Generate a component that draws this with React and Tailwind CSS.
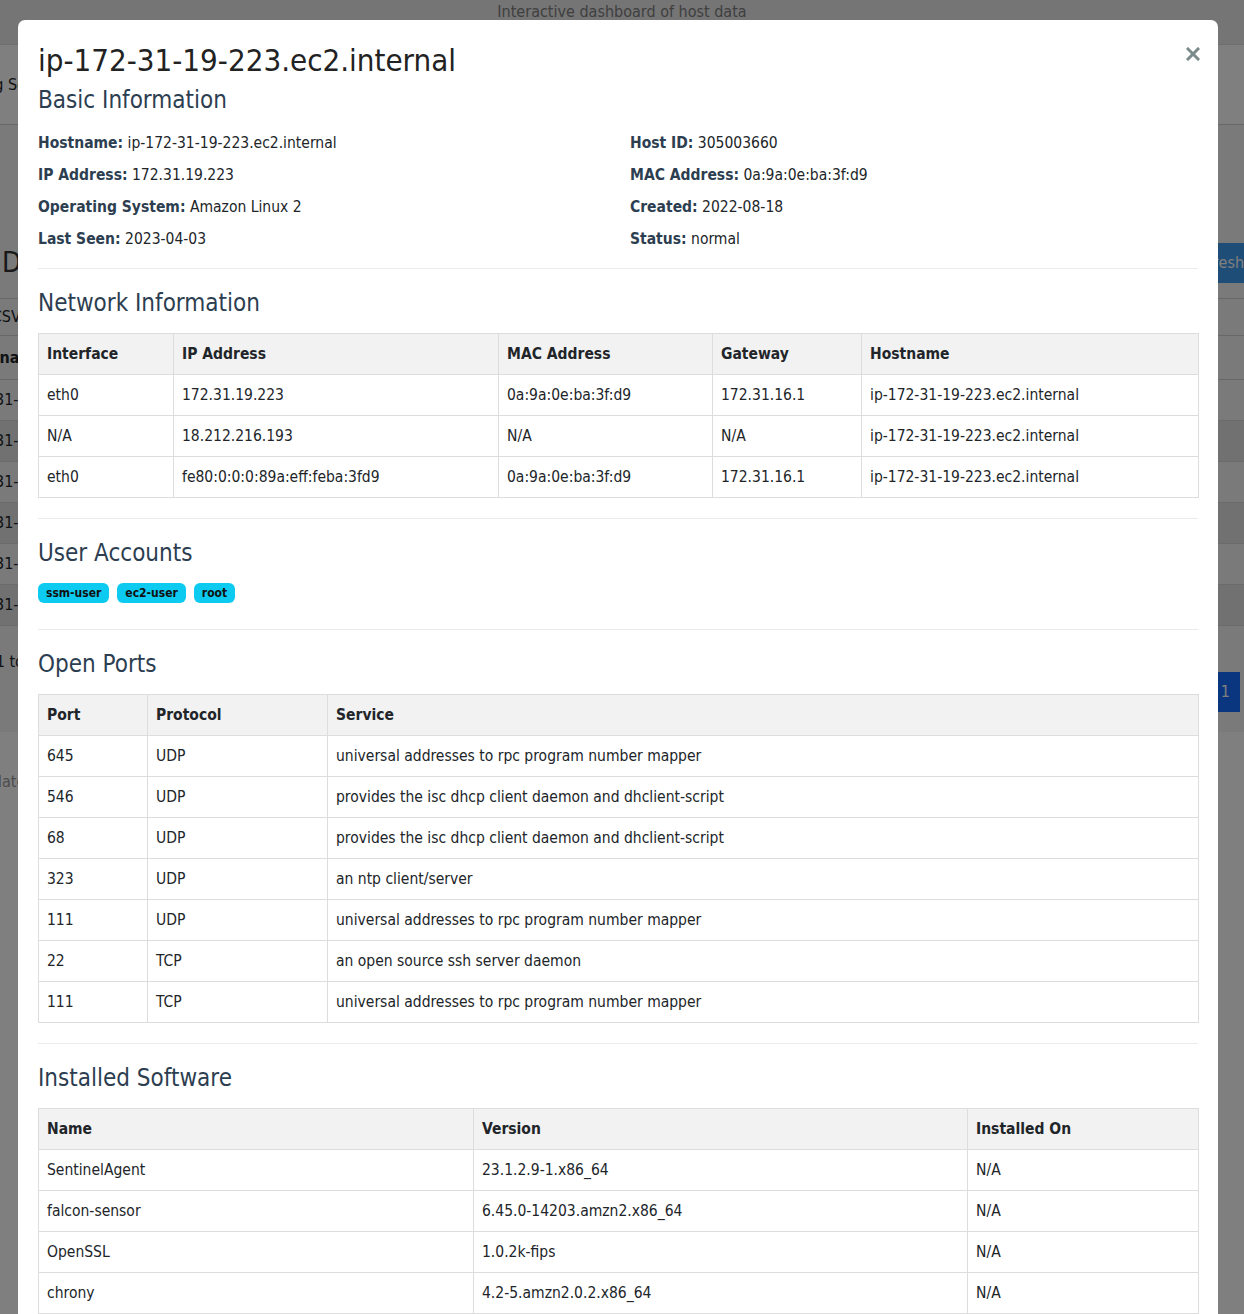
import React from 'react';

const FONT = { fontFamily: '"DejaVu Sans Condensed", "DejaVu Sans", Tahoma, sans-serif' };

const networkRows = [
    ['eth0', '172.31.19.223', '0a:9a:0e:ba:3f:d9', '172.31.16.1', 'ip-172-31-19-223.ec2.internal'],
    ['N/A', '18.212.216.193', 'N/A', 'N/A', 'ip-172-31-19-223.ec2.internal'],
    ['eth0', 'fe80:0:0:0:89a:eff:feba:3fd9', '0a:9a:0e:ba:3f:d9', '172.31.16.1', 'ip-172-31-19-223.ec2.internal'],
];

const portRows = [
    ['645', 'UDP', 'universal addresses to rpc program number mapper'],
    ['546', 'UDP', 'provides the isc dhcp client daemon and dhclient-script'],
    ['68', 'UDP', 'provides the isc dhcp client daemon and dhclient-script'],
    ['323', 'UDP', 'an ntp client/server'],
    ['111', 'UDP', 'universal addresses to rpc program number mapper'],
    ['22', 'TCP', 'an open source ssh server daemon'],
    ['111', 'TCP', 'universal addresses to rpc program number mapper'],
];

const softwareRows = [
    ['SentinelAgent', '23.1.2.9-1.x86_64', 'N/A'],
    ['falcon-sensor', '6.45.0-14203.amzn2.x86_64', 'N/A'],
    ['OpenSSL', '1.0.2k-fips', 'N/A'],
    ['chrony', '4.2-5.amzn2.0.2.x86_64', 'N/A'],
    ['amazon-ssm-agent', '3.2.582.0-1.x86_64', 'N/A'],
    ['openssh-server', '7.4p1-22.amzn2.0.1.x86_64', 'N/A'],
];

const basicInfo = [
    ['Hostname:', 'ip-172-31-19-223.ec2.internal'],
    ['Host ID:', '305003660'],
    ['IP Address:', '172.31.19.223'],
    ['MAC Address:', '0a:9a:0e:ba:3f:d9'],
    ['Operating System:', 'Amazon Linux 2'],
    ['Created:', '2022-08-18'],
    ['Last Seen:', '2023-04-03'],
    ['Status:', 'normal'],
];

const DataTable = ({ headers, widths, rows }) => (
    <table className="w-full border-collapse table-fixed mt-[15px]">
        <colgroup>
            {widths.map((w, i) => <col key={i} style={{ width: w }} />)}
        </colgroup>
        <thead>
            <tr className="bg-[#f2f2f2]">
                {headers.map((h) => (
                    <th key={h} className="border border-[#dddddd] px-[8px] py-[8px] text-left font-bold leading-[24px] text-[#212529]">
                        {h}
                    </th>
                ))}
            </tr>
        </thead>
        <tbody>
            {rows.map((row, i) => (
                <tr key={i}>
                    {row.map((c, j) => (
                        <td key={j} className="border border-[#dddddd] px-[8px] py-[8px] leading-[24px] text-[#212529] whitespace-nowrap overflow-hidden">
                            {c}
                        </td>
                    ))}
                </tr>
            ))}
        </tbody>
    </table>
);

const SectionTitle = ({ children }) => (
    <h4 className="mt-[20px] text-[24px] leading-[29px] font-normal text-[#2c3e50]">{children}</h4>
);

const Divider = ({ className }) => <hr className={`border-0 border-t border-[#ebebeb] ${className}`} />;

// left edge of the page that peeks out beside the dialog
const EdgeText = ({ offset, className = '', children }) => (
    <div className="w-[18px] overflow-hidden">
        <span className={`block whitespace-nowrap ${offset} ${className}`}>{children}</span>
    </div>
);

const BackgroundPage = () => (
    <div className="w-[1244px] min-h-[1314px] bg-white overflow-hidden text-[16px] text-[#212529]">
        <div className="h-[45px] bg-[#eaeaea] border-b border-[#dcdcdc] flex justify-center">
            <span className="leading-[24px] text-[#7e7e7e]">Interactive dashboard of host data</span>
        </div>
        <div className="h-[80px] border-b border-[#d0d0d0] flex items-center">
            <EdgeText offset="ml-[-62px]">Listening Services</EdgeText>
        </div>
        <div className="h-[607px] bg-[#f4f4f4] pt-[113px] overflow-hidden">
            <div className="flex items-center justify-between h-[50px]">
                <EdgeText offset="ml-[2px]" className="text-[28px] text-[#333]">Dashboard</EdgeText>
                <div className="w-[26px] overflow-hidden flex justify-end">
                    <span className="shrink-0 bg-[#3c9aee] text-white rounded-l px-[12px] leading-[40px] mr-[-12px]">Refresh</span>
                </div>
            </div>
            <div className="mt-[10px] border-t border-[#cfcfcf] h-[37px] flex items-center">
                <EdgeText offset="ml-[-60px]">Export CSV</EdgeText>
            </div>
            <div className="border-t border-[#cfcfcf]">
                <div className="h-[44px] border-b border-[#cfcfcf] flex items-center font-bold">
                    <EdgeText offset="ml-[-38px]">Hostname</EdgeText>
                </div>
                {[0, 1, 2, 3, 4, 5].map((i) => (
                    <div key={i} className={`h-[41px] border-b border-[#d6d6d6] flex items-center ${i % 2 === 1 ? 'bg-[#e2e2e2]' : ''}`}>
                        <EdgeText offset="ml-[-56px]">ip-172-31-19-2{i}.ec2.internal</EdgeText>
                    </div>
                ))}
            </div>
            <div className="flex items-start justify-between mt-[20px]">
                <div className="mt-[4px]">
                    <EdgeText offset="ml-[-70px]">Showing 1 to 6 of 6 entries</EdgeText>
                </div>
                <span className="mr-[4px] mt-[26px] bg-[#146aff] text-white pl-[6px] pr-[10px] leading-[40px]">1</span>
            </div>
        </div>
        <div className="pt-[38px]">
            <EdgeText offset="ml-[-60px]" className="text-[#999]">Last update</EdgeText>
        </div>
    </div>
);

export default function App() {
    return (
        <div className="relative w-[1244px] h-[1314px] overflow-hidden" style={FONT}>
            <BackgroundPage />

            {/* Modal backdrop + dialog */}
            <div className="absolute inset-0 bg-black/50 overflow-hidden">
                <div className="ml-[18px] mt-[20px] w-[1200px] bg-white rounded-[7px] px-[20px] pt-[22px] pb-[40px] relative text-[15.5px] text-[#212529]">
                    <button className="absolute right-[18px] top-[27px] w-[14px] h-[14px]" aria-label="Close">
                        <svg viewBox="0 0 14 14" className="w-[14px] h-[14px]">
                            <path d="M2 2 L12 12 M12 2 L2 12" stroke="#7b8a8b" strokeWidth="3" strokeLinecap="square" />
                        </svg>
                    </button>

                    <h2 className="text-[31px] leading-[37px] font-normal text-[#222]">ip-172-31-19-223.ec2.internal</h2>

                    <h4 className="mt-[7px] text-[24px] leading-[29px] font-normal text-[#2c3e50]">Basic Information</h4>
                    <div className="mt-[16px] grid grid-cols-2 gap-x-[24px] gap-y-[8px]">
                        {basicInfo.map(([label, value]) => (
                            <div key={label} className="leading-[24px]">
                                <span className="font-bold text-[#2c3e50]">{label}</span> {value}
                            </div>
                        ))}
                    </div>

                    <Divider className="mt-[17px]" />
                    <SectionTitle>Network Information</SectionTitle>
                    <DataTable
                        headers={['Interface', 'IP Address', 'MAC Address', 'Gateway', 'Hostname']}
                        widths={['135px', '325px', '214px', '149px', '337px']}
                        rows={networkRows}
                    />

                    <Divider className="mt-[20px]" />
                    <SectionTitle>User Accounts</SectionTitle>
                    <div className="mt-[15px] flex gap-[8px]">
                        {['ssm-user', 'ec2-user', 'root'].map((u) => (
                            <span key={u} className="bg-[#0dcaf0] text-[#111] text-[12px] font-bold leading-[12px] px-[8px] py-[4px] rounded-[6px]">
                                {u}
                            </span>
                        ))}
                    </div>

                    <Divider className="mt-[26px]" />
                    <SectionTitle>Open Ports</SectionTitle>
                    <DataTable
                        headers={['Port', 'Protocol', 'Service']}
                        widths={['109px', '180px', '871px']}
                        rows={portRows}
                    />

                    <Divider className="mt-[20px]" />
                    <SectionTitle>Installed Software</SectionTitle>
                    <DataTable
                        headers={['Name', 'Version', 'Installed On']}
                        widths={['435px', '494px', '231px']}
                        rows={softwareRows}
                    />
                </div>
            </div>
        </div>
    );
}
